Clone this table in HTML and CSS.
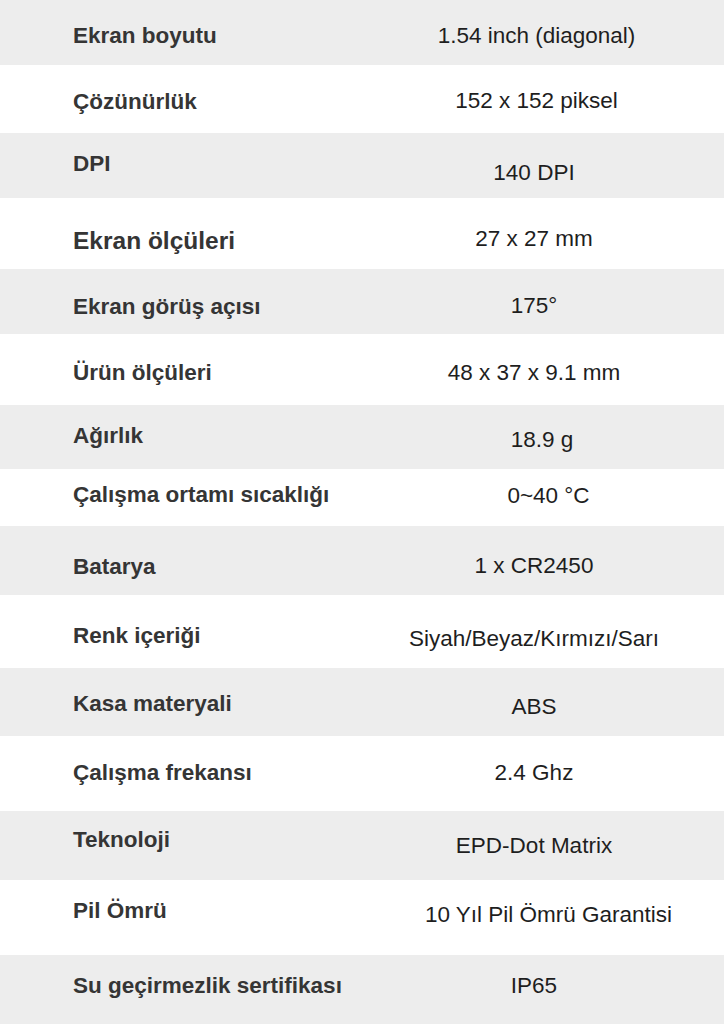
FILE: index.html
```html
<!DOCTYPE html>
<html lang="tr">
<head>
<meta charset="utf-8">
<title>Teknik Özellikler</title>
<link rel="stylesheet" href="styles.css">
</head>
<body>
<div class="spec">
  <div class="row alt h65"><div class="label pt23">Ekran boyutu</div><div class="value pt23 nudge">1.54 inch (diagonal)</div></div>
  <div class="row h68"><div class="label pt24">Çözünürlük</div><div class="value pt23 nudge">152 x 152 piksel</div></div>
  <div class="row alt h65"><div class="label pt18">DPI</div><div class="value pt27">140 DPI</div></div>
  <div class="row h71"><div class="label big pt30">Ekran ölçüleri</div><div class="value pt28">27 x 27 mm</div></div>
  <div class="row alt h65"><div class="label pt25">Ekran görüş açısı</div><div class="value pt24">175°</div></div>
  <div class="row h71"><div class="label pt26">Ürün ölçüleri</div><div class="value pt26">48 x 37 x 9.1 mm</div></div>
  <div class="row alt h64"><div class="label pt18">Ağırlık</div><div class="value pt22 shift-s">18.9 g</div></div>
  <div class="row h57"><div class="label pt13">Çalışma ortamı sıcaklığı</div><div class="value pt14 shift-l">0~40 °C</div></div>
  <div class="row alt h69"><div class="label pt28">Batarya</div><div class="value pt27">1 x CR2450</div></div>
  <div class="row h73"><div class="label pt28">Renk içeriği</div><div class="value pt31">Siyah/Beyaz/Kırmızı/Sarı</div></div>
  <div class="row alt h68"><div class="label pt23">Kasa materyali</div><div class="value pt26">ABS</div></div>
  <div class="row h75"><div class="label pt24">Çalışma frekansı</div><div class="value pt24">2.4 Ghz</div></div>
  <div class="row alt h69"><div class="label pt16">Teknoloji</div><div class="value pt22">EPD-Dot Matrix</div></div>
  <div class="row h75"><div class="label pt18">Pil Ömrü</div><div class="value pt22 shift-l">10 Yıl Pil Ömrü Garantisi</div></div>
  <div class="row alt h69"><div class="label pt18">Su geçirmezlik sertifikası</div><div class="value pt18">IP65</div></div>
</div>
</body>
</html>
```

FILE: styles.css
```css
html, body {
  margin: 0;
  padding: 0;
  background: #ffffff;
}

body {
  font-family: "Liberation Sans", Arial, sans-serif;
  font-size: 22.5px;
  line-height: 26px;
}

.spec {
  display: flex;
  flex-direction: column;
  width: 724px;
}

.row {
  display: grid;
  grid-template-columns: 344px 1fr;
  align-items: start;
  box-sizing: border-box;
}

.row.alt {
  background: #ededed;
}

.label {
  padding-left: 73px;
  font-weight: bold;
  color: #353535;
  white-space: nowrap;
}

.label.big {
  font-size: 24.5px;
}

.value {
  text-align: center;
  color: #1e1e1e;
  white-space: nowrap;
}

.value.nudge { padding-left: 5px; }
.value.shift-s { padding-left: 16px; }
.value.shift-l { padding-left: 29px; }

/* row heights */
.h57 { height: 57px; }
.h64 { height: 64px; }
.h65 { height: 65px; }
.h68 { height: 68px; }
.h69 { height: 69px; }
.h71 { height: 71px; }
.h73 { height: 73px; }
.h75 { height: 75px; }

/* cell top offsets */
.pt13 { padding-top: 13px; }
.pt14 { padding-top: 14px; }
.pt16 { padding-top: 16px; }
.pt18 { padding-top: 18px; }
.pt22 { padding-top: 22px; }
.pt23 { padding-top: 23px; }
.pt24 { padding-top: 24px; }
.pt25 { padding-top: 25px; }
.pt26 { padding-top: 26px; }
.pt27 { padding-top: 27px; }
.pt28 { padding-top: 28px; }
.pt30 { padding-top: 30px; }
.pt31 { padding-top: 31px; }
```
